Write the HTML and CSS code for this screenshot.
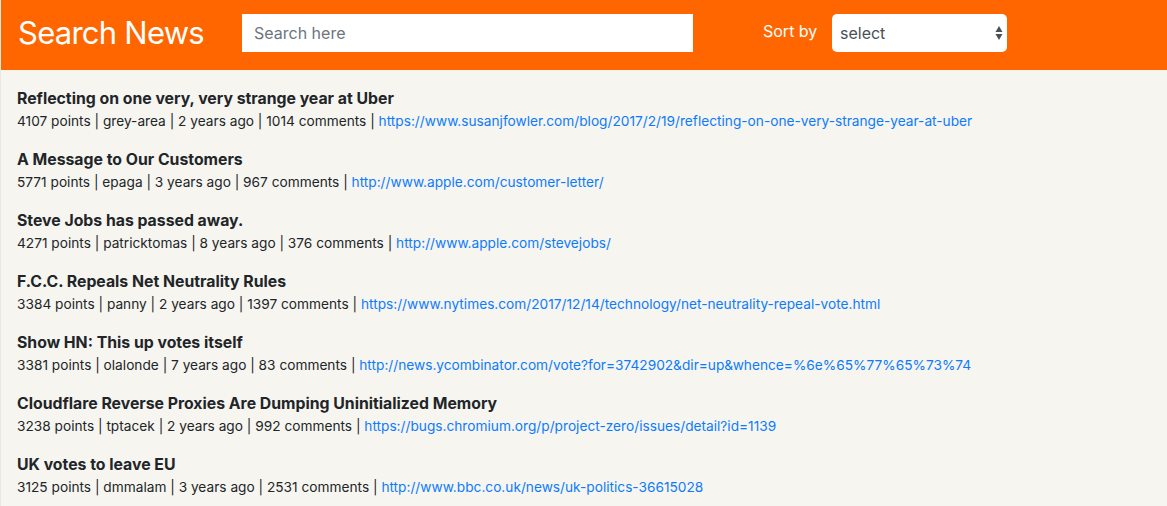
FILE: index.html
```html
<!DOCTYPE html>
<html lang="en">
<head>
<meta charset="utf-8">
<title>Search News</title>
<link rel="stylesheet" href="styles.css">
</head>
<body>
<div class="page">
  <header class="topbar">
    <h1 class="brand">Search News</h1>
    <input class="search" type="text" placeholder="Search here">
    <label class="sort-label">Sort by</label>
    <div class="select-wrap">
      <select class="sort-select">
        <option>select</option>
      </select>
      <svg class="select-arrows" width="8" height="16" viewBox="0 0 8 16" aria-hidden="true">
        <path d="M4 1 L7.5 7 L0.5 7 Z" fill="#495057"/>
        <path d="M4 15 L7.5 9 L0.5 9 Z" fill="#495057"/>
      </svg>
    </div>
  </header>
  <main class="list">
    <article class="item">
      <h2 class="item-title">Reflecting on one very, very strange year at Uber</h2>
      <p class="meta">4107 points | grey-area | 2 years ago | 1014 comments | <a href="#">https://www.susanjfowler.com/blog/2017/2/19/reflecting-on-one-very-strange-year-at-uber</a></p>
    </article>
    <article class="item">
      <h2 class="item-title">A Message to Our Customers</h2>
      <p class="meta">5771 points | epaga | 3 years ago | 967 comments | <a href="#">http://www.apple.com/customer-letter/</a></p>
    </article>
    <article class="item">
      <h2 class="item-title">Steve Jobs has passed away.</h2>
      <p class="meta">4271 points | patricktomas | 8 years ago | 376 comments | <a href="#">http://www.apple.com/stevejobs/</a></p>
    </article>
    <article class="item">
      <h2 class="item-title">F.C.C. Repeals Net Neutrality Rules</h2>
      <p class="meta">3384 points | panny | 2 years ago | 1397 comments | <a href="#">https://www.nytimes.com/2017/12/14/technology/net-neutrality-repeal-vote.html</a></p>
    </article>
    <article class="item">
      <h2 class="item-title">Show HN: This up votes itself</h2>
      <p class="meta">3381 points | olalonde | 7 years ago | 83 comments | <a href="#">http://news.ycombinator.com/vote?for=3742902&amp;dir=up&amp;whence=%6e%65%77%65%73%74</a></p>
    </article>
    <article class="item">
      <h2 class="item-title">Cloudflare Reverse Proxies Are Dumping Uninitialized Memory</h2>
      <p class="meta">3238 points | tptacek | 2 years ago | 992 comments | <a href="#">https://bugs.chromium.org/p/project-zero/issues/detail?id=1139</a></p>
    </article>
    <article class="item">
      <h2 class="item-title">UK votes to leave EU</h2>
      <p class="meta">3125 points | dmmalam | 3 years ago | 2531 comments | <a href="#">http://www.bbc.co.uk/news/uk-politics-36615028</a></p>
    </article>
  </main>
</div>
</body>
</html>
```

FILE: styles.css
```css
* { box-sizing: border-box; }

html, body {
  margin: 0;
  padding: 0;
  background: #f6f5ef;
}

body {
  font-family: Inter, "Noto Sans", "Liberation Sans", sans-serif;
  color: #212529;
}

.page {
  border-left: 1px solid #e9e9e4;
  min-height: 506px;
}

.topbar {
  height: 70px;
  background: #ff6600;
  display: flex;
  align-items: center;
  padding-left: 17px;
}

.brand {
  margin: 0;
  width: 224px;
  font-size: 31px;
  font-weight: 400;
  color: #fff;
  line-height: 1;
  padding-bottom: 6px;
  letter-spacing: -0.75px;
}

.search {
  width: 451px;
  height: 38px;
  border: 0;
  border-radius: 0;
  padding: 0 12px;
  font-family: inherit;
  font-size: 16px;
  color: #495057;
  background: #fff;
  outline: none;
  margin-bottom: 4px;
}

.search::placeholder { color: #6c757d; }

.sort-label {
  margin-left: 70px;
  width: 69px;
  color: #fff;
  font-size: 16px;
  margin-bottom: 8px;
}

.select-wrap {
  position: relative;
  width: 175px;
  height: 38px;
  margin-bottom: 4px;
}

.sort-select {
  -webkit-appearance: none;
  appearance: none;
  width: 100%;
  height: 100%;
  border: 0;
  border-radius: 5px;
  background: #fff;
  padding: 0 8px;
  font-family: inherit;
  font-size: 16px;
  color: #495057;
  outline: none;
}

.select-arrows {
  position: absolute;
  right: 4px;
  top: 11px;
  pointer-events: none;
}

.list {
  padding: 17px 16px 0 16px;
}

.item {
  margin-bottom: 17px;
}

.item-title {
  margin: 0;
  font-size: 15.8px;
  font-weight: 700;
  line-height: 24px;
}

.meta {
  margin: 0;
  font-size: 13.7px;
  line-height: 20px;
}

.meta a {
  color: #0d7bff;
  text-decoration: none;
}
```
